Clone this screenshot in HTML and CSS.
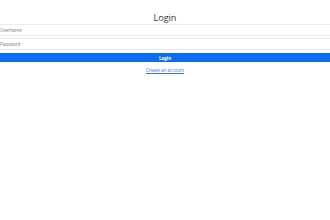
FILE: index.html
```html
<!DOCTYPE html>
<html lang="en">
<head>
    <meta charset="UTF-8">
    <meta name="viewport" content="width=device-width, initial-scale=1.0">
    <title>Login</title>
    <link rel="stylesheet" href="styles.css">
</head>
<body>
<div class="login">
    <h1>Login</h1>
    <form class="login-form">
        <input type="text" placeholder="Username">
        <input type="password" placeholder="Password">
        <button type="button">Login</button>
    </form>
    <a class="signup" href="#">Create an account</a>
</div>
</body>
</html>
```

FILE: styles.css
```css
body {
    margin: 0;
    background: #ffffff;
    font-family: 'Open Sans', sans-serif;
    color: #333;
}

.login {
    padding-top: 12px;
    text-align: center;
}

h1 {
    margin: 0 0 1px;
    font-size: 9px;
    font-weight: 400;
    line-height: 11px;
    color: #333;
}

.login-form {
    display: flex;
    flex-direction: column;
    gap: 2px;
}

.login-form input {
    box-sizing: border-box;
    width: 100%;
    height: 12px;
    margin: 0;
    padding: 0;
    border: 1px solid #ececec;
    border-width: 1px 0;
    font-family: inherit;
    font-size: 4.5px;
    outline: none;
}

.login-form input::placeholder {
    color: #777;
}

.login-form button {
    margin-top: 1px;
    height: 9px;
    padding: 0;
    border: none;
    background: #0b6cf5;
    color: #fff;
    font-family: inherit;
    font-size: 4.5px;
    font-weight: bold;
}

.signup {
    display: block;
    margin-top: 5px;
    line-height: 7px;
    font-size: 4.5px;
    color: #3f74d6;
}
```
